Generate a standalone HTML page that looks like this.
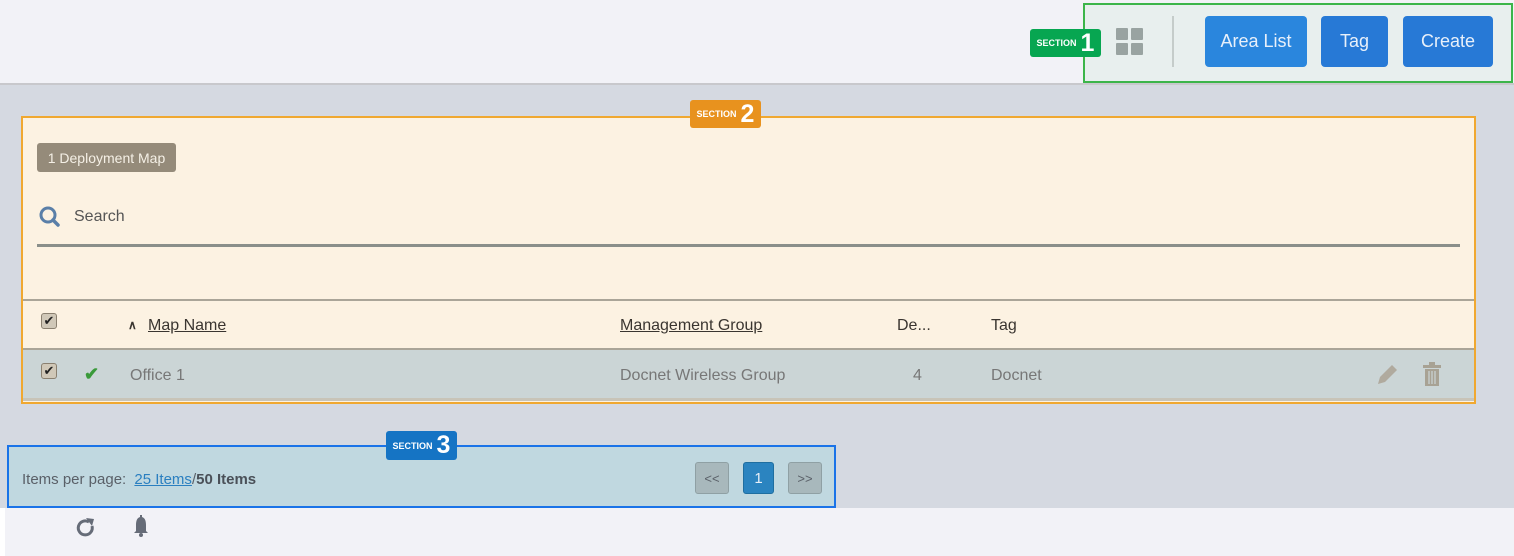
<!DOCTYPE html>
<html><head><style>
*{box-sizing:border-box;margin:0;padding:0}
body{width:1514px;height:556px;overflow:hidden;background:#d5d9e1;font-family:"Liberation Sans",sans-serif;position:relative}
.a{position:absolute}
.btn{position:absolute;top:16px;height:51px;border-radius:4px;color:#e8f0fa;font-size:18px;display:flex;align-items:center;justify-content:center}
.lbl{position:absolute;color:#fff;border-radius:3px;display:flex;align-items:center;justify-content:center;font-weight:bold}
.lbl small{font-size:9px;margin-right:4px}
.lbl b{font-size:25px}
.cb{position:absolute;width:16px;height:16px;border:1px solid #8a8070;border-radius:3px;background:#d0c8b8;font-size:13px;line-height:14px;text-align:center;color:#222}
.t{position:absolute;font-size:16px;color:#3a3530}
</style></head><body>
<div class="a" style="left:0;top:0;width:1514px;height:85px;background:#f2f2f7;border-bottom:2px solid #c8c8cc"></div>
<div class="a" style="left:1083px;top:3px;width:430px;height:80px;background:#e8efee;border:2px solid #3cb54a"></div>
<div class="lbl" style="left:1030px;top:29px;width:71px;height:28px;background:#07a651"><small>SECTION</small><b>1</b></div>
<div class="a" style="left:1116px;top:28px;width:12px;height:12px;background:#99a3a1;border-radius:1px"></div>
<div class="a" style="left:1131px;top:28px;width:12px;height:12px;background:#99a3a1;border-radius:1px"></div>
<div class="a" style="left:1116px;top:43px;width:12px;height:12px;background:#99a3a1;border-radius:1px"></div>
<div class="a" style="left:1131px;top:43px;width:12px;height:12px;background:#99a3a1;border-radius:1px"></div>
<div class="a" style="left:1172px;top:16px;width:2px;height:51px;background:#c5ccca"></div>
<div class="btn" style="left:1205px;width:102px;background:#2a86dd">Area List</div>
<div class="btn" style="left:1321px;width:67px;background:#2779d6">Tag</div>
<div class="btn" style="left:1403px;width:90px;background:#2779d6">Create</div>

<div class="a" style="left:21px;top:116px;width:1455px;height:288px;background:#fcf2e2;border:2px solid #f0a830"></div>
<div class="lbl" style="left:690px;top:100px;width:71px;height:28px;background:#e8921e"><small>SECTION</small><b>2</b></div>
<div class="a" style="left:37px;top:143px;width:139px;height:29px;background:#958b7a;border-radius:3px;color:#f5f0e6;font-size:14px;line-height:31px;text-align:center">1 Deployment Map</div>
<svg class="a" style="left:38px;top:205px" width="24" height="24"><circle cx="10" cy="10" r="7" fill="none" stroke="#5a7fa8" stroke-width="3"/><path d="M15 15l5 5" stroke="#5a7fa8" stroke-width="3.5" stroke-linecap="round"/></svg>
<div class="t" style="left:74px;top:208px;color:#555">Search</div>
<div class="a" style="left:37px;top:244px;width:1423px;height:3px;background:#8a8f8a"></div>
<div class="a" style="left:23px;top:299px;width:1451px;height:2px;background:#aaa598"></div>
<div class="a" style="left:23px;top:348px;width:1451px;height:2px;background:#aaa598"></div>
<div class="a" style="left:23px;top:350px;width:1451px;height:48px;background:#cbd5d6"></div>
<div class="a" style="left:23px;top:398px;width:1451px;height:3px;background:#c8c4b8"></div>
<div class="cb" style="left:41px;top:313px">✔</div>
<div class="cb" style="left:41px;top:363px">✔</div>
<div class="t" style="left:128px;top:318px;font-size:12px;font-weight:bold">∧</div>
<div class="t" style="left:148px;top:317px;text-decoration:underline">Map Name</div>
<div class="t" style="left:620px;top:317px;text-decoration:underline">Management Group</div>
<div class="t" style="left:897px;top:317px">De...</div>
<div class="t" style="left:991px;top:317px">Tag</div>
<div class="t" style="left:84px;top:364px;color:#3a9a3a;font-size:18px;font-weight:bold">✔</div>
<div class="t" style="left:130px;top:367px;color:#777">Office 1</div>
<div class="t" style="left:620px;top:367px;color:#777">Docnet Wireless Group</div>
<div class="t" style="left:913px;top:367px;color:#777">4</div>
<div class="t" style="left:991px;top:367px;color:#777">Docnet</div>
<svg class="a" style="left:1374px;top:362px" width="24" height="26"><path d="M4 22l2-7 12-12 5 5-12 12z" fill="#b0aa9e"/></svg>
<svg class="a" style="left:1421px;top:362px" width="22" height="26"><rect x="2" y="3" width="18" height="3" fill="#a8a294"/><rect x="8" y="0" width="6" height="3" fill="#a8a294"/><rect x="4" y="7" width="14" height="17" fill="#a8a294"/><path d="M8 9v13M11 9v13M14 9v13" stroke="#cbd5d6" stroke-width="1.2"/></svg>

<div class="a" style="left:7px;top:445px;width:829px;height:63px;background:#c0d8e0;border:2px solid #1a73e8"></div>
<div class="lbl" style="left:386px;top:431px;width:71px;height:29px;background:#1574c4"><small>SECTION</small><b>3</b></div>
<div class="t" style="left:22px;top:471px;font-size:15px;color:#5a6068">Items per page: <span style="color:#2a7fc0;text-decoration:underline;margin-left:4px">25 Items</span>/<b style="color:#4a5058">50 Items</b></div>
<div class="a" style="left:695px;top:462px;width:34px;height:32px;background:#a8b8bc;border:1px solid #8fa0a4;border-radius:3px;color:#5a6068;font-size:13px;line-height:32px;text-align:center">&lt;&lt;</div>
<div class="a" style="left:743px;top:462px;width:31px;height:32px;background:#2b84c0;border:1px solid #1f6ea0;border-radius:3px;color:#e8f0f8;font-size:15px;line-height:32px;text-align:center">1</div>
<div class="a" style="left:788px;top:462px;width:34px;height:32px;background:#a8b8bc;border:1px solid #8fa0a4;border-radius:3px;color:#5a6068;font-size:13px;line-height:32px;text-align:center">&gt;&gt;</div>

<div class="a" style="left:0;top:508px;width:1514px;height:48px;background:#f2f2f7"></div>
<div class="a" style="left:0;top:508px;width:5px;height:48px;background:#fff"></div>
<svg class="a" style="left:74px;top:516px" width="24" height="24"><path d="M18 10a7 7 0 1 1-3-4" fill="none" stroke="#666c78" stroke-width="3"/><path d="M12 2l8 1-2 7z" fill="#666c78"/></svg>
<svg class="a" style="left:130px;top:514px" width="22" height="26"><path d="M11 3c-4 0-5 4-5 8v6l-2 2h14l-2-2v-6c0-4-1-8-5-8z" fill="#666c78"/><rect x="10" y="1" width="2" height="3" fill="#666c78"/><circle cx="11" cy="21" r="2" fill="#666c78"/></svg>
</body></html>
